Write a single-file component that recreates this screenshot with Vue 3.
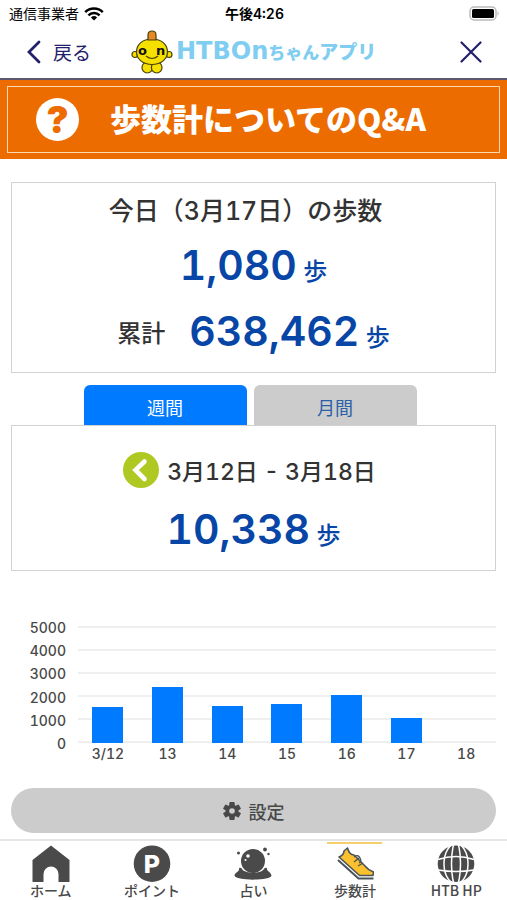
<script setup>
import { ref } from 'vue'

const period = ref('week')

const max = 5000
const ticks = [5000, 4000, 3000, 2000, 1000, 0]
const days = [
  { label: '3/12', steps: 1560 },
  { label: '13', steps: 2410 },
  { label: '14', steps: 1590 },
  { label: '15', steps: 1650 },
  { label: '16', steps: 2048 },
  { label: '17', steps: 1080 },
  { label: '18', steps: 0 },
]

const nav = [
  { id: 'home', label: 'ホーム' },
  { id: 'point', label: 'ポイント' },
  { id: 'fortune', label: '占い' },
  { id: 'steps', label: '歩数計' },
  { id: 'web', label: 'HTB HP' },
]
</script>

<template>
  <div class="app">
    <div class="status">
      <div class="carrier">
        <span>通信事業者</span>
        <svg width="20" height="14" viewBox="0 0 20 14">
          <path d="M10 13.6 6.9 10.4a4.5 4.5 0 0 1 6.2 0z" />
          <g fill="none" stroke="#000" stroke-width="2.5">
            <path d="M4.4 8.3a8 8 0 0 1 11.2 0" />
            <path d="M1.2 5.1a12.5 12.5 0 0 1 17.6 0" />
          </g>
        </svg>
      </div>
      <b>午後4:26</b>
      <svg class="battery" width="31" height="15" viewBox="0 0 31 15">
        <rect x="1" y="1" width="26" height="13" rx="4" fill="#fff" stroke="#bbb" stroke-width="1.5" />
        <rect x="3" y="3" width="22" height="9" rx="1.5" />
        <path d="M28.5 5q2.5 2.5 0 5z" fill="#bbb" />
      </svg>
    </div>

    <header class="header">
      <button class="back">
        <svg width="14" height="24" viewBox="0 0 14 24">
          <path d="M12 2 2 12l10 10" fill="none" stroke="#23206b" stroke-width="2.8" stroke-linecap="round" />
        </svg>
        戻る
      </button>
      <div class="logo">
        <svg width="42" height="44" viewBox="0 0 42 44">
          <g stroke="#4a4010" stroke-width="1.2">
            <ellipse cx="16.3" cy="37.5" rx="5.3" ry="5.5" fill="#f6e000" />
            <ellipse cx="25.7" cy="37.5" rx="5.3" ry="5.5" fill="#f6e000" />
            <circle cx="4" cy="24.5" r="3" fill="#f6e000" />
            <circle cx="38" cy="24.5" r="3" fill="#f6e000" />
            <path d="M21 9C11 9 5.5 15 5.5 22S12 34.5 21 34.5 36.5 29 36.5 22 31 9 21 9z" fill="#f6e000" />
            <path d="M17 10V5q0-4 4-4t4 4v5z" fill="#e58a22" />
            <path d="M15 26q6 5 12 0" fill="none" />
          </g>
          <text x="7" y="25" class="eye">o</text>
          <text x="25" y="25" class="eye">n</text>
        </svg>
        <span class="logo-text"><span class="latin">HTBOn</span><span class="small">ちゃん</span>アプリ</span>
      </div>
      <button class="close" aria-label="閉じる">
        <svg width="22" height="22" viewBox="0 0 22 22">
          <path d="M1.5 1.5l19 19M20.5 1.5l-19 19" stroke="#23206b" stroke-width="2.2" stroke-linecap="round" />
        </svg>
      </button>
    </header>

    <a href="#" class="banner">
      <span class="banner-inner">
        <span class="question">?</span>
        <span class="banner-text">歩数計についてのQ&amp;A</span>
      </span>
    </a>

    <main>
      <section class="card today">
        <h2>今日（3月17日）の歩数</h2>
        <p class="count"><strong>1,080</strong> 歩</p>
        <p class="count"><span class="total">累計</span><strong>638,462</strong> 歩</p>
      </section>

      <div class="tabs">
        <button :class="{ active: period === 'week' }" @click="period = 'week'">週間</button>
        <button :class="{ active: period === 'month' }" @click="period = 'month'">月間</button>
      </div>

      <section class="card range">
        <div class="dates">
          <button class="prev" aria-label="前の週">
            <svg width="36" height="36" viewBox="0 0 36 36">
              <circle cx="18" cy="18" r="18" fill="#afc822" />
              <path d="M21.5 9.5 12.5 18l9 9" fill="none" stroke="#fff" stroke-width="4.6" stroke-linecap="round" />
            </svg>
          </button>
          <span>3月12日 - 3月18日</span>
        </div>
        <p class="count"><strong>10,338</strong> 歩</p>
      </section>

      <section class="chart">
        <div class="scale">
          <span v-for="t in ticks" :key="t">{{ t }}</span>
        </div>
        <div class="plot">
          <div class="lines">
            <i v-for="t in ticks" :key="t"></i>
          </div>
          <div class="bars">
            <div v-for="day in days" :key="day.label" class="slot">
              <div class="bar" :style="{ height: (day.steps / max) * 100 + '%' }"></div>
            </div>
          </div>
        </div>
        <div class="labels">
          <span v-for="day in days" :key="day.label">{{ day.label }}</span>
        </div>
      </section>

      <button class="settings">
        <svg width="18" height="18" viewBox="0 0 18 18">
          <g fill="#484848">
            <rect v-for="a in [0, 60, 120]" :key="a" x="6.3" y="0" width="5.4" height="18" rx="1" :transform="`rotate(${a} 9 9)`" />
            <circle cx="9" cy="9" r="6.5" />
          </g>
          <circle cx="9" cy="9" r="2.8" fill="#ccc" />
        </svg>
        設定
      </button>
    </main>

    <nav class="nav">
      <a v-for="item in nav" :key="item.id" href="#" :class="{ current: item.id === 'steps' }">
        <svg width="38" height="38" viewBox="0 0 38 38" fill="#4a4a4a">
          <path v-if="item.id === 'home'" d="M19 .5 37.5 15v22H26.5V29a7.5 7.5 0 0 0-15 0v8H.5V15z" />
          <template v-else-if="item.id === 'point'">
            <circle cx="19" cy="18.7" r="18.3" />
            <text x="19" y="27.5" class="p">P</text>
          </template>
          <template v-else-if="item.id === 'fortune'">
            <circle cx="19" cy="16" r="12" />
            <circle cx="14" cy="11" r="1.8" fill="#fff" />
            <circle cx="11.5" cy="15" r="1" fill="#fff" />
            <path d="M5 23q2-1 3 1c3 5 19 5 22 0q1-2 3-1c-1 3 4 4 4.5 7.500C37 36 1 36 .5 30.500 1 27 6 27 5 23z" />
            <circle cx="4.5" cy="8" r="1.5" />
            <circle cx="31" cy="4.5" r="1.9" />
            <circle cx="34.5" cy="9" r="1.2" />
          </template>
          <template v-else-if="item.id === 'steps'">
            <path d="M2 15 22.5 33.5H37.5" fill="none" stroke="#4a5359" stroke-width="2" />
            <path d="M3 12 23.5 30.5H37L37.5 27Q32 25 28.5 20.5L18 10Q13.5 10 11.5 3L8 6Q8 10 3 12z" fill="#fbc02d" stroke="#4a5359" stroke-width="1.6" stroke-linejoin="round" />
            <path d="M18 17l5-4M22 21l5-3M18 12q4-3 6 1t-1 5" fill="none" stroke="#4a5359" stroke-width="1.3" />
          </template>
          <template v-else>
            <circle cx="19" cy="18.7" r="18.3" />
            <g fill="none" stroke="#fff" stroke-width="1.5">
              <path d="M19 11.5Q10 11.5 1 14.500M19 11.500Q28 11.500 37 14.500M1 25Q19 28 37 25" />
              <ellipse cx="19" cy="18.7" rx="12" ry="20" />
              <ellipse cx="19" cy="18.7" rx="4.5" ry="22" />
            </g>
          </template>
        </svg>
        <span>{{ item.label }}</span>
      </a>
    </nav>
  </div>
</template>

<style>
body {
  margin: 0;
  background: #fff;
}
</style>

<style scoped>
.app {
  display: flex;
  flex-direction: column;
  min-height: 100vh;
  font-family: Inter, "Noto Sans CJK JP", sans-serif;
  font-weight: 500;
  font-variant-numeric: tabular-nums;
  color: #333;
}

.app * {
  box-sizing: border-box;
}

button {
  padding: 0;
  border: 0;
  background: none;
  font: inherit;
  color: inherit;
}

a {
  color: inherit;
  text-decoration: none;
}

p,
h2 {
  margin: 0;
}

svg {
  display: block;
  flex: none;
}

.status {
  display: grid;
  grid-template-columns: 1fr auto 1fr;
  align-items: center;
  height: 27px;
  padding: 0 7px 0 9px;
  font-size: 14px;
  font-weight: 400;
  line-height: 27px;
  color: #000;
}

.status b {
  font-weight: 600;
}

.carrier {
  display: flex;
  align-items: center;
  gap: 5px;
}

.battery {
  justify-self: end;
}

.header {
  display: flex;
  align-items: center;
  height: 53px;
  padding: 0 25px 2px 27px;
  border-bottom: 2px solid #5b5872;
}

.back {
  display: flex;
  align-items: center;
  gap: 12px;
  font-size: 19px;
  font-weight: 400;
  color: #23206b;
}

.logo {
  display: flex;
  align-items: center;
  gap: 3px;
  margin: 0 auto 0 40px;
}

.eye {
  font: 900 13px "DejaVu Sans", sans-serif;
  fill: #111;
}

.logo-text {
  font-size: 19px;
  font-weight: 900;
  line-height: 24px;
  white-space: nowrap;
  color: #7fcdf0;
}

.latin {
  font-family: "DejaVu Sans", sans-serif;
  font-size: 24px;
}

.small {
  font-size: 17px;
}

.banner {
  padding: 6px 7px;
  background: #ec6c00;
}

.banner-inner {
  display: flex;
  align-items: center;
  gap: 31px;
  height: 67px;
  padding-left: 28px;
  border: 1px solid #fbd9b0;
  font-family: "Noto Sans CJK JP", sans-serif;
  font-size: 31px;
  font-weight: 900;
  color: #fff;
}

.banner-text {
  padding-bottom: 4px;
}

.question {
  width: 43px;
  height: 43px;
  border-radius: 50%;
  background: #fff;
  font-family: Inter, sans-serif;
  font-size: 37px;
  line-height: 43px;
  text-align: center;
  color: #ec6c00;
}

main {
  padding: 23px 11px 0;
}

.card {
  border: 1px solid #d2d2d2;
  text-align: center;
}

.today {
  height: 191px;
  padding-top: 10px;
}

h2 {
  padding-right: 16px;
  font-size: 25px;
  font-weight: 500;
  line-height: 36px;
}

.count {
  font-size: 24px;
  line-height: 66px;
  color: #0746a6;
}

.today h2 + .count {
  margin-top: 10px;
}

.count strong {
  font-size: 41px;
  font-weight: 600;
  line-height: 1;
}

.total {
  margin-right: 24px;
  line-height: 1;
  vertical-align: 4px;
  color: #333;
}

.tabs {
  display: flex;
  justify-content: center;
  gap: 7px;
  margin-top: 12px;
  padding-right: 7px;
}

.tabs button {
  width: 163px;
  height: 40px;
  padding-top: 4px;
  border-radius: 6px 6px 0 0;
  background: #ccc;
  font-size: 18px;
  font-weight: 400;
  color: #2b5fa8;
}

.tabs .active {
  background: #007aff;
  color: #fff;
}

.range {
  height: 146px;
  padding-top: 26px;
}

.dates {
  display: flex;
  align-items: center;
  justify-content: center;
  gap: 8px;
  height: 36px;
  padding-right: 8px;
  font-size: 23px;
}

.range .count {
  margin-top: 15px;
}

.chart {
  display: grid;
  grid-template-columns: 55px 1fr;
  column-gap: 12px;
  margin-top: 55px;
  font-size: 14px;
  line-height: 22px;
  color: #484848;
}

.scale {
  display: flex;
  flex-direction: column;
  justify-content: space-between;
  margin: -9px 0 -12px;
  text-align: right;
}

.plot {
  display: grid;
  height: 117px;
}

.lines,
.bars {
  grid-area: 1 / 1;
}

.lines {
  display: flex;
  flex-direction: column;
  justify-content: space-between;
}

.lines i {
  height: 2px;
  background: #efefef;
}

.bars {
  display: grid;
  grid-template-columns: repeat(7, 1fr);
}

.slot {
  display: flex;
  align-items: flex-end;
  justify-content: center;
}

.bar {
  width: 31px;
  background: #007aff;
}

.labels {
  display: grid;
  grid-template-columns: repeat(7, 1fr);
  grid-column: 2;
  text-align: center;
}

.settings {
  display: flex;
  align-items: center;
  justify-content: center;
  gap: 8px;
  width: 100%;
  height: 45px;
  margin-top: 23px;
  border-radius: 23px;
  background: #ccc;
  font-size: 18px;
  color: #484848;
}

.nav {
  display: grid;
  grid-template-columns: repeat(5, 1fr);
  margin-top: auto;
  height: 61px;
  border-top: 2px solid #e6e6e6;
  font-size: 14px;
  line-height: 14px;
  font-family: "Noto Sans CJK JP", sans-serif;
  color: #484848;
}

.nav a {
  display: flex;
  flex-direction: column;
  align-items: center;
  justify-self: center;
  width: 55px;
  padding-top: 4px;
  white-space: nowrap;
}

.nav .current {
  padding-top: 1px;
  border-top: 2px solid #f5cf6b;
  margin-top: 1px;
}

.p {
  font: 800 25px Inter, sans-serif;
  text-anchor: middle;
  fill: #fff;
}
</style>
